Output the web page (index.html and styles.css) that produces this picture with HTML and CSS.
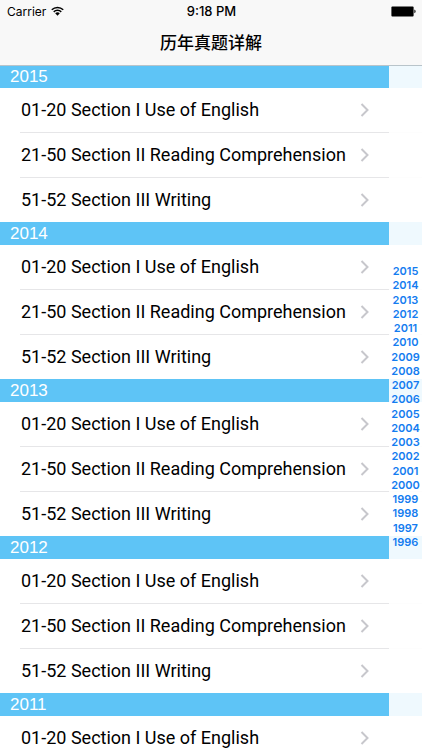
FILE: index.html
```html
<!DOCTYPE html>
<html lang="zh-CN">
<head>
<meta charset="utf-8">
<meta name="viewport" content="width=device-width, initial-scale=1">
<title>历年真题详解</title>
<link rel="stylesheet" href="styles.css">
</head>

<body>
<div class="page">
	<header class="top">
		<div class="status">
			<div class="status_left">
				<span>Carrier</span>
				<svg class="wifi" viewBox="0 0 26 20" aria-hidden="true">
					<path d="M1.5 7.5a16.3 16.3 0 0 1 23 0M5.5 11.7a10.6 10.6 0 0 1 15 0" fill="none" stroke="#000" stroke-width="3"/>
					<path d="M8.4 14.6a6.5 6.5 0 0 1 9.2 0L13 19.4z"/>
				</svg>
			</div>
			<div class="status_time">9:18 PM</div>
			<div class="status_right">
				<svg class="battery" viewBox="0 0 25 11" aria-hidden="true">
					<rect x="0.4" y="0.4" width="22.2" height="10" rx="1"/>
					<path d="M23.4 3.6c1.6 .5 1.6 3.2 0 3.7z"/>
				</svg>
			</div>
		</div>
		<h1>历年真题详解</h1>
	</header>
	<main class="list">
		<h2 id="y2015">2015</h2>
		<ul>
			<li><a href="#">01-20 Section I Use of English<svg class="arrow" viewBox="0 0 9 14"><path d="M1.5 1l6 6-6 6"/></svg></a></li>
			<li><a href="#">21-50 Section II Reading Comprehension<svg class="arrow" viewBox="0 0 9 14"><path d="M1.5 1l6 6-6 6"/></svg></a></li>
			<li><a href="#">51-52 Section III Writing<svg class="arrow" viewBox="0 0 9 14"><path d="M1.5 1l6 6-6 6"/></svg></a></li>
		</ul>
		<h2 id="y2014">2014</h2>
		<ul>
			<li><a href="#">01-20 Section I Use of English<svg class="arrow" viewBox="0 0 9 14"><path d="M1.5 1l6 6-6 6"/></svg></a></li>
			<li><a href="#">21-50 Section II Reading Comprehension<svg class="arrow" viewBox="0 0 9 14"><path d="M1.5 1l6 6-6 6"/></svg></a></li>
			<li><a href="#">51-52 Section III Writing<svg class="arrow" viewBox="0 0 9 14"><path d="M1.5 1l6 6-6 6"/></svg></a></li>
		</ul>
		<h2 id="y2013">2013</h2>
		<ul>
			<li><a href="#">01-20 Section I Use of English<svg class="arrow" viewBox="0 0 9 14"><path d="M1.5 1l6 6-6 6"/></svg></a></li>
			<li><a href="#">21-50 Section II Reading Comprehension<svg class="arrow" viewBox="0 0 9 14"><path d="M1.5 1l6 6-6 6"/></svg></a></li>
			<li><a href="#">51-52 Section III Writing<svg class="arrow" viewBox="0 0 9 14"><path d="M1.5 1l6 6-6 6"/></svg></a></li>
		</ul>
		<h2 id="y2012">2012</h2>
		<ul>
			<li><a href="#">01-20 Section I Use of English<svg class="arrow" viewBox="0 0 9 14"><path d="M1.5 1l6 6-6 6"/></svg></a></li>
			<li><a href="#">21-50 Section II Reading Comprehension<svg class="arrow" viewBox="0 0 9 14"><path d="M1.5 1l6 6-6 6"/></svg></a></li>
			<li><a href="#">51-52 Section III Writing<svg class="arrow" viewBox="0 0 9 14"><path d="M1.5 1l6 6-6 6"/></svg></a></li>
		</ul>
		<h2 id="y2011">2011</h2>
		<ul>
			<li><a href="#">01-20 Section I Use of English<svg class="arrow" viewBox="0 0 9 14"><path d="M1.5 1l6 6-6 6"/></svg></a></li>
		</ul>
	</main>
	<nav class="years">
		<div class="years_in">
			<a href="#y2015">2015</a>
			<a href="#y2014">2014</a>
			<a href="#y2013">2013</a>
			<a href="#y2012">2012</a>
			<a href="#y2011">2011</a>
			<a href="#y2010">2010</a>
			<a href="#y2009">2009</a>
			<a href="#y2008">2008</a>
			<a href="#y2007">2007</a>
			<a href="#y2006">2006</a>
			<a href="#y2005">2005</a>
			<a href="#y2004">2004</a>
			<a href="#y2003">2003</a>
			<a href="#y2002">2002</a>
			<a href="#y2001">2001</a>
			<a href="#y2000">2000</a>
			<a href="#y1999">1999</a>
			<a href="#y1998">1998</a>
			<a href="#y1997">1997</a>
			<a href="#y1996">1996</a>
		</div>
	</nav>
</div>
</body>
</html>
```

FILE: styles.css
```css
*{margin:0;padding:0;box-sizing:border-box;}
body{background:#fff;color:#000;font-family:Inter,"Noto Sans CJK SC",sans-serif;}
a{text-decoration:none;}
li{list-style:none;}
svg{display:block;}
.page{
	display:flex;
	flex-direction:column;
	height:100vh;
	overflow:hidden;
	position:relative;
}
.top{
	flex:none;
	height:65px;
	background:#f8f8f8;
	box-shadow:0 1px 0 #b9c4ca;
	position:relative;
	z-index:2;
}
.status{
	display:grid;
	grid-template-columns:1fr auto 1fr;
	align-items:center;
	height:22px;
	padding:0 6px 0 7px;
	font-size:12px;
}
.status_left{display:flex;align-items:center;gap:5px;}
.status_time{font-size:13px;font-weight:500;}
.status_right{display:flex;justify-content:flex-end;}
.wifi{width:13px;height:10px;}
.battery{width:25px;height:11px;}
.top h1{
	font-size:17px;
	line-height:43px;
	font-weight:500;
	text-align:center;
}
.list{
	flex:1;
	min-height:0;
	overflow:hidden;
}
.list h2{
	height:23px;
	padding-left:10px;
	background:#5ec4f6;
	color:#fff;
	font:17px/23px "Liberation Sans",Arial,sans-serif;
}
.list li{
	margin-left:20px;
	border-bottom:1px solid #e6e6e8;
}
.list li:last-child{border-bottom:none;}
.list li a{
	display:flex;
	align-items:center;
	justify-content:space-between;
	height:44px;
	padding:0 53px 0 1px;
	color:#000;
	font-family:Roboto,sans-serif;
	font-size:18px;
	line-height:22px;
	white-space:nowrap;
}
.arrow{
	width:9px;
	height:14px;
	fill:none;
	stroke:#c7c7cc;
	stroke-width:2;
}
/* year index lies over the right edge of the list */
.years{
	position:absolute;
	top:63px;
	right:0;
	bottom:0;
	width:33px;
	display:flex;
	align-items:center;
	background:rgba(255,255,255,0.9);
}
.years_in{
	display:grid;
	grid-auto-rows:1fr;
	width:100%;
	height:285px;
}
.years a{
	color:#147cf0;
	font-size:11px;
	line-height:14px;
	font-weight:600;
	text-align:center;
}
```
